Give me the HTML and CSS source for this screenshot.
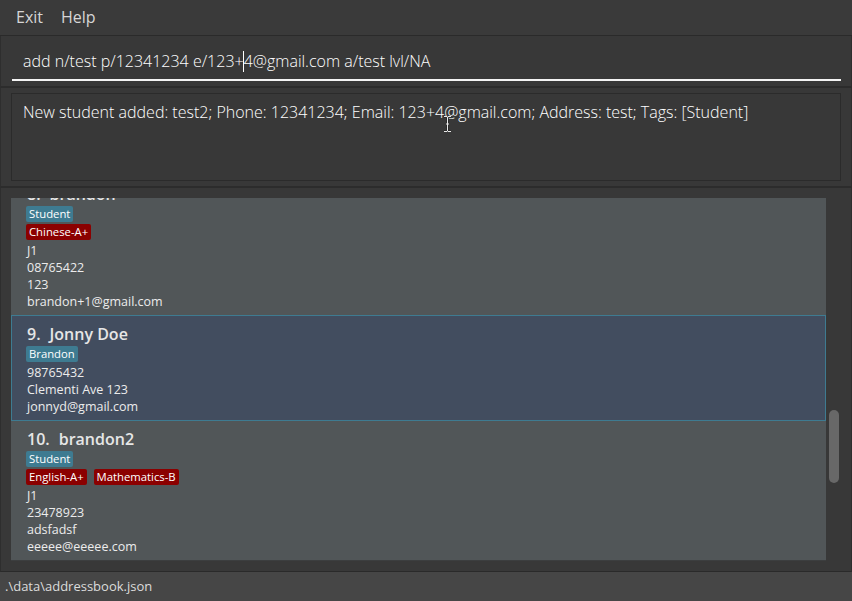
FILE: index.html
```html
<!DOCTYPE html>
<html>
<head>
<meta charset="utf-8">
<link rel="stylesheet" href="styles.css">
</head>
<body>
<div class="app">
  <div class="menubar">
    <span class="menu-item">Exit</span>
    <span class="menu-item">Help</span>
  </div>
  <div class="pane command-pane">
    <div class="command-field">add n/test p/12341234 e/123+<span class="caret"></span>4@gmail.com a/test lvl/NA</div>
  </div>
  <div class="pane result-pane">
    <div class="result-box">New student added: test2; Phone: 12341234; Email: 123+4@gmail.com; Address: test; Tags: [Student]
      <svg class="ibeam" width="9" height="16" viewBox="0 0 9 16"><path d="M1 0.5h3l0.5 0.6 0.5-0.6h3M4.5 1v14M1 15.5h3l0.5-0.6 0.5 0.6h3M3 8h3" fill="none" stroke="#202020" stroke-width="2.2"/><path d="M1 0.5h3l0.5 0.6 0.5-0.6h3M4.5 1v14M1 15.5h3l0.5-0.6 0.5 0.6h3M3 8h3" fill="none" stroke="#e8e8e8" stroke-width="1"/></svg>
    </div>
  </div>
  <div class="pane list-pane">
    <div class="list-viewport">
      <div class="list">
        <div class="cell scrolled">
          <div class="cell-name"><span class="cell-index">8.</span>brandon</div>
          <div class="tag-row"><span class="tag tag-role">Student</span></div>
          <div class="tag-row"><span class="tag tag-subject">Chinese-A+</span></div>
          <div class="cell-label">J1</div>
          <div class="cell-label">08765422</div>
          <div class="cell-label">123</div>
          <div class="cell-label">brandon+1@gmail.com</div>
        </div>
        <div class="cell selected">
          <div class="cell-name"><span class="cell-index">9.</span>Jonny Doe</div>
          <div class="tag-row"><span class="tag tag-role">Brandon</span></div>
          <div class="cell-label">98765432</div>
          <div class="cell-label">Clementi Ave 123</div>
          <div class="cell-label">jonnyd@gmail.com</div>
        </div>
        <div class="cell">
          <div class="cell-name"><span class="cell-index">10.</span>brandon2</div>
          <div class="tag-row"><span class="tag tag-role">Student</span></div>
          <div class="tag-row"><span class="tag tag-subject">English-A+</span><span class="tag tag-subject">Mathematics-B</span></div>
          <div class="cell-label">J1</div>
          <div class="cell-label">23478923</div>
          <div class="cell-label">adsfadsf</div>
          <div class="cell-label">eeeee@eeeee.com</div>
        </div>
      </div>
      <div class="scrollbar"><div class="thumb"></div></div>
    </div>
  </div>
  <div class="statusbar">.\data\addressbook.json</div>
</div>
</body>
</html>
```

FILE: styles.css
```css
* { box-sizing: border-box; }
html, body { margin: 0; padding: 0; }
body {
  width: 852px;
  height: 601px;
  overflow: hidden;
  background: #383838;
  font-family: "Open Sans", "Noto Sans", sans-serif;
  color: #ffffff;
}
.app {
  display: flex;
  flex-direction: column;
  width: 852px;
  height: 601px;
}
.menubar {
  height: 36px;
  flex: none;
  display: flex;
  align-items: center;
  gap: 18px;
  padding: 0 0 1px 16px;
  border-bottom: 1px solid #2a2a2a;
  background: #3a3a3a;
}
.menu-item {
  font-size: 16px;
  color: #d6d6d6;
  line-height: 20px;
}
.pane {
  flex: none;
  border-left: 1px solid #2e2e2e;
  border-right: 1px solid #2e2e2e;
  border-bottom: 2px solid #2c2c2c;
  background: #383838;
}
.command-pane {
  height: 52px;
  padding: 7px 10px 0 11px;
}
.command-field {
  height: 38px;
  line-height: 36px;
  padding-left: 11px;
  border-bottom: 2px solid #f4f4f4;
  font-size: 16px;
  font-weight: 300;
  color: #ffffff;
  white-space: nowrap;
}
.caret {
  display: inline-block;
  width: 0;
  height: 21px;
  border-left: 1px solid #ffffff;
  vertical-align: middle;
  margin: 0 0 2px -1px;
}
.result-pane {
  height: 100px;
  padding: 5px 10px 0 10px;
}
.result-box {
  position: relative;
  height: 88px;
  border: 1px solid #2b2b2b;
  padding: 7px 11px 0 11px;
  font-size: 16px;
  font-weight: 300;
  line-height: 22px;
  color: #ffffff;
  white-space: nowrap;
}
.ibeam {
  position: absolute;
  left: 431px;
  top: 22px;
}
.list-pane {
  flex: 1;
  padding: 10px 10px 10px 10px;
  border-bottom: 1px solid #2a2a2a;
}
.list-viewport {
  height: 363px;
  display: flex;
  overflow: hidden;
}
.list {
  flex: 1;
  background: #3c3e3f;
  overflow: hidden;
}
.cell {
  background: #515658;
  padding: 8px 15px 5px 16px;
}
.cell.scrolled {
  margin-top: -22px;
}
.cell.selected {
  background: #424d5f;
  border: 1px solid #3e7b91;
  padding: 8px 14px 5px 15px;
}
.cell-name {
  font-size: 16px;
  font-weight: 600;
  line-height: 20px;
  height: 20px;
  color: #e6e6e6;
  margin-bottom: 2px;
}
.cell-index {
  margin-right: 9px;
}
.tag-row {
  display: flex;
  gap: 7px;
  height: 18px;
  margin-left: -1px;
}
.tag {
  height: 16px;
  padding: 0 3px;
  border-radius: 2px;
  font-size: 11.3px;
  line-height: 16px;
  color: #ffffff;
}
.tag-role { background: #3e7b91; }
.tag-subject { background: #8b0000; }
.cell-label {
  font-size: 12.5px;
  line-height: 17px;
  height: 17px;
  color: #ececec;
}
.scrollbar {
  width: 15px;
  flex: none;
  position: relative;
  background: #383838;
}
.thumb {
  position: absolute;
  left: 3px;
  top: 212px;
  width: 10px;
  height: 73px;
  border-radius: 5px;
  background: #686868;
}
.statusbar {
  flex: 1;
  background: #464646;
  padding-left: 5px;
  font-size: 13px;
  line-height: 29px;
  color: #dcdcdc;
}
```
